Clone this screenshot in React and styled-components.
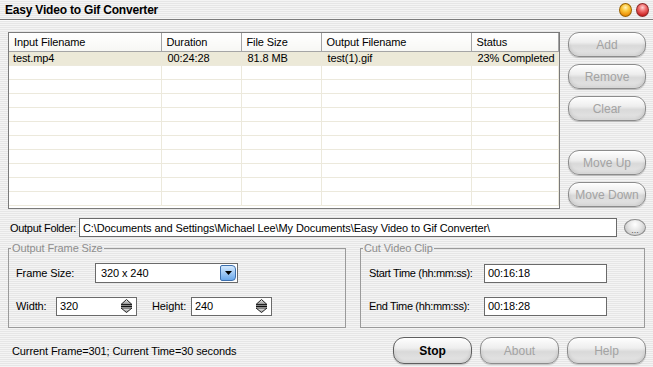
import React from "react";
import styled, { createGlobalStyle } from "styled-components";

const GlobalStyle = createGlobalStyle`
  html, body {
    margin: 0;
    padding: 0;
    background: #ececec;
  }
`;

const Window = styled.div`
  width: 653px;
  height: 367px;
  display: flex;
  flex-direction: column;
  overflow: hidden;
  box-sizing: border-box;
  background: repeating-linear-gradient(
    to bottom,
    #f4f4f4 0px,
    #f4f4f4 1px,
    #e6e6e6 1px,
    #e6e6e6 2px
  );
  font-family: "Liberation Sans", Arial, sans-serif;
  font-size: 11px;
  letter-spacing: -0.1px;
  color: #000;
`;

const TitleBar = styled.div`
  height: 19px;
  flex-shrink: 0;
  display: flex;
  align-items: center;
  justify-content: space-between;
  padding: 0 4px 0 5px;
  border-bottom: 1px solid #7b7b7b;
  box-shadow: 0 1px 0 #fbfbfb;
`;

const Title = styled.span`
  font-size: 12px;
  font-weight: bold;
  letter-spacing: -0.2px;
`;

const Lights = styled.div`
  display: flex;
  gap: 4px;
`;

const Light = styled.span`
  width: 13px;
  height: 14px;
  border-radius: 50%;
  box-sizing: border-box;
  border: 1px solid ${(p) => (p.$red ? "#8e2a2a" : "#9a6200")};
  background: ${(p) =>
    p.$red
      ? "radial-gradient(circle at 50% 30%, #ffd2d2 0%, #f07070 35%, #c81e1e 80%, #a01010 100%)"
      : "radial-gradient(circle at 50% 30%, #fff4c0 0%, #fbc83c 35%, #ec8a00 80%, #c06000 100%)"};
`;

const Main = styled.div`
  flex: 1;
  display: flex;
  flex-direction: column;
  padding: 12px 7px 0 8px;
`;

const Top = styled.div`
  display: flex;
  gap: 8px;
  height: 177px;
`;

const ListBox = styled.div`
  width: 552px;
  box-sizing: border-box;
  border: 1px solid #7a7a7a;
  background: #fff;
  overflow: hidden;
`;

const Table = styled.table`
  width: 100%;
  border-collapse: collapse;
  table-layout: fixed;
`;

const Th = styled.th`
  height: 18px;
  padding: 0 5px;
  text-align: left;
  font-weight: normal;
  white-space: nowrap;
  border-bottom: 1px solid #a5a5a5;
  border-right: 1px solid #a5a5a5;
  background: linear-gradient(to bottom, #ffffff, #f7f7f4);
`;

const Td = styled.td`
  height: 13px;
  padding: 0 4px 0 ${(p) => (p.$first ? 4 : 6)}px;
  white-space: nowrap;
  line-height: 13px;
  border-bottom: 1px solid #ece9dc;
  border-right: 1px solid #ece9dc;
  background: ${(p) => (p.$selected ? "#ece9d8" : "#fff")};
`;

const SideButtons = styled.div`
  width: 78px;
  display: flex;
  flex-direction: column;
  gap: 7px;
`;

const GlossButton = styled.button`
  width: ${(p) => p.$w || 78}px;
  height: ${(p) => p.$h || 25}px;
  flex-shrink: 0;
  margin: ${(p) => (p.$push ? `${p.$push}px 0 0 0` : 0)};
  padding: 0;
  box-sizing: border-box;
  border: 1px solid ${(p) => (p.$primary ? "#5e5e5e" : "#8c8c8c")};
  border-radius: 11px;
  background: linear-gradient(
    to bottom,
    #fefefe 0%,
    #eeeeee 40%,
    #d9d9d9 55%,
    #e2e2e2 85%,
    #f1f1f1 100%
  );
  box-shadow: inset 0 1px 1px #fff, inset 0 -2px 3px rgba(0, 0, 0, 0.12),
    0 1px 1px rgba(0, 0, 0, 0.2);
  font-family: "Liberation Sans", Arial, sans-serif;
  font-size: 12px;
  font-weight: ${(p) => (p.$primary ? "bold" : "normal")};
  color: ${(p) => (p.$primary ? "#000" : "#a3a3a3")};
`;

const FolderRow = styled.div`
  display: flex;
  align-items: center;
  height: 19px;
  margin-top: 9px;
`;

const FolderLabel = styled.span`
  width: 69px;
  flex-shrink: 0;
  padding-left: 2px;
  white-space: nowrap;
  letter-spacing: -0.3px;
`;

const TextBox = styled.div`
  width: ${(p) => p.$w}px;
  height: ${(p) => p.$h || 19}px;
  flex-shrink: 0;
  box-sizing: border-box;
  border: 1px solid #6a6a6a;
  background: #fff;
  display: flex;
  align-items: center;
  justify-content: space-between;
  padding: 0 3px 0 3px;
  white-space: nowrap;
  overflow: hidden;
`;

const BrowseButton = styled.button`
  width: 23px;
  height: 17px;
  margin-left: 7px;
  padding: 0;
  border: 1px solid #8c8c8c;
  border-radius: 50%;
  background: radial-gradient(
    ellipse at 50% 30%,
    #ffffff 0%,
    #e6e6e6 45%,
    #c9c9c9 80%,
    #b5b5b5 100%
  );
  font-size: 9px;
  line-height: 20px;
  color: #555;
  font-family: "Liberation Sans", Arial, sans-serif;
`;

const GroupsRow = styled.div`
  display: flex;
  gap: 14px;
  margin-top: 5px;
`;

const Group = styled.fieldset`
  width: ${(p) => p.$w}px;
  height: 86px;
  box-sizing: border-box;
  margin: 0;
  padding: 0 ${(p) => p.$pad}px;
  border: 1px solid #9a9a9a;
  display: flex;
  flex-direction: column;
  gap: 13px;
`;

const Legend = styled.legend`
  padding: 0 1px;
  margin-left: ${(p) => -p.$pad + 2}px;
  color: #8e8e8e;
  line-height: 13px;
`;

const FieldRow = styled.div`
  display: flex;
  align-items: center;
  height: 20px;
  &:first-of-type {
    margin-top: 8px;
  }
`;

const FieldLabel = styled.span`
  width: ${(p) => p.$w}px;
  margin-left: ${(p) => p.$gap || 0}px;
  flex-shrink: 0;
  white-space: nowrap;
  letter-spacing: ${(p) => (p.$tight ? "-0.35px" : "inherit")};
`;

const Select = styled.div`
  width: 143px;
  height: 20px;
  box-sizing: border-box;
  border: 1px solid #6a6a6a;
  background: #fff;
  display: flex;
  align-items: center;
  justify-content: space-between;
  padding: 0 1px 0 5px;
`;

const DropButton = styled.span`
  width: 16px;
  height: 16px;
  box-sizing: border-box;
  border: 1px solid #3c6fae;
  border-radius: 2px 4px 4px 2px;
  background: linear-gradient(to bottom, #d4e9fd 0%, #a6cdf6 45%, #6aa8ec 100%);
  display: flex;
  align-items: center;
  justify-content: center;
`;

const Footer = styled.div`
  display: flex;
  align-items: center;
  gap: 8px;
  margin-top: 9px;
  height: 27px;
`;

const Status = styled.span`
  flex: 1;
  padding-left: 4px;
  white-space: nowrap;
`;

const Spinner = () => (
  <svg width="13" height="14" viewBox="0 0 13 14">
    <defs>
      <linearGradient id="sp" x1="0" y1="0" x2="0" y2="1">
        <stop offset="0" stopColor="#f4f4f4" />
        <stop offset="1" stopColor="#8a8a8a" />
      </linearGradient>
    </defs>
    <path d="M6.5 0.5 L12 5.5 L1 5.5 Z" fill="url(#sp)" stroke="#222" strokeWidth="1" />
    <rect x="1" y="6.5" width="11" height="1.5" fill="#111" />
    <path d="M1 9 L12 9 L6.5 13.5 Z" fill="url(#sp)" stroke="#222" strokeWidth="1" />
  </svg>
);

const columns = [
  { label: "Input Filename", w: 152 },
  { label: "Duration", w: 80 },
  { label: "File Size", w: 80 },
  { label: "Output Filename", w: 150 },
  { label: "Status" },
];

const rows = [["test.mp4", "00:24:28", "81.8 MB", "test(1).gif", "23% Completed"]];
const emptyRows = 10;

export default function App() {
  return (
    <>
      <GlobalStyle />
      <Window>
        <TitleBar>
          <Title>Easy Video to Gif Converter</Title>
          <Lights>
            <Light />
            <Light $red />
          </Lights>
        </TitleBar>
        <Main>
          <Top>
            <ListBox>
              <Table>
                <colgroup>
                  {columns.map((c) => (
                    <col key={c.label} style={c.w ? { width: c.w } : undefined} />
                  ))}
                </colgroup>
                <thead>
                  <tr>
                    {columns.map((c) => (
                      <Th key={c.label}>{c.label}</Th>
                    ))}
                  </tr>
                </thead>
                <tbody>
                  {rows.map((r) => (
                    <tr key={r[0]}>
                      {r.map((cell, i) => (
                        <Td key={i} $selected $first={i === 0}>
                          {cell}
                        </Td>
                      ))}
                    </tr>
                  ))}
                  {Array.from({ length: emptyRows }).map((_, i) => (
                    <tr key={"e" + i}>
                      {columns.map((c) => (
                        <Td key={c.label} />
                      ))}
                    </tr>
                  ))}
                </tbody>
              </Table>
            </ListBox>
            <SideButtons>
              <GlossButton>Add</GlossButton>
              <GlossButton>Remove</GlossButton>
              <GlossButton>Clear</GlossButton>
              <GlossButton $push={22}>Move Up</GlossButton>
              <GlossButton>Move Down</GlossButton>
            </SideButtons>
          </Top>

          <FolderRow>
            <FolderLabel>Output Folder:</FolderLabel>
            <TextBox $w={538}>
              C:\Documents and Settings\Michael Lee\My Documents\Easy Video to Gif Converter\
            </TextBox>
            <BrowseButton>...</BrowseButton>
          </FolderRow>

          <GroupsRow>
            <Group $w={338} $pad={7}>
              <Legend $pad={7}>Output Frame Size</Legend>
              <FieldRow>
                <FieldLabel $w={79}>Frame Size:</FieldLabel>
                <Select>
                  <span>320 x 240</span>
                  <DropButton>
                    <svg width="7" height="4" viewBox="0 0 7 4">
                      <path d="M0 0 L7 0 L3.5 4 Z" fill="#000" />
                    </svg>
                  </DropButton>
                </Select>
              </FieldRow>
              <FieldRow>
                <FieldLabel $w={40}>Width:</FieldLabel>
                <TextBox $w={81}>
                  <span>320</span>
                  <Spinner />
                </TextBox>
                <FieldLabel $w={39} $gap={15}>
                  Height:
                </FieldLabel>
                <TextBox $w={81}>
                  <span>240</span>
                  <Spinner />
                </TextBox>
              </FieldRow>
            </Group>
            <Group $w={285} $pad={8}>
              <Legend $pad={8}>Cut Video Clip</Legend>
              <FieldRow>
                <FieldLabel $w={115} $tight>
                  Start Time (hh:mm:ss):
                </FieldLabel>
                <TextBox $w={123}>00:16:18</TextBox>
              </FieldRow>
              <FieldRow>
                <FieldLabel $w={115} $tight>
                  End Time (hh:mm:ss):
                </FieldLabel>
                <TextBox $w={123}>00:18:28</TextBox>
              </FieldRow>
            </Group>
          </GroupsRow>

          <Footer>
            <Status>Current Frame=301; Current Time=30 seconds</Status>
            <GlossButton $w={79} $h={27} $primary>
              Stop
            </GlossButton>
            <GlossButton $w={79} $h={27}>
              About
            </GlossButton>
            <GlossButton $w={79} $h={27}>
              Help
            </GlossButton>
          </Footer>
        </Main>
      </Window>
    </>
  );
}
